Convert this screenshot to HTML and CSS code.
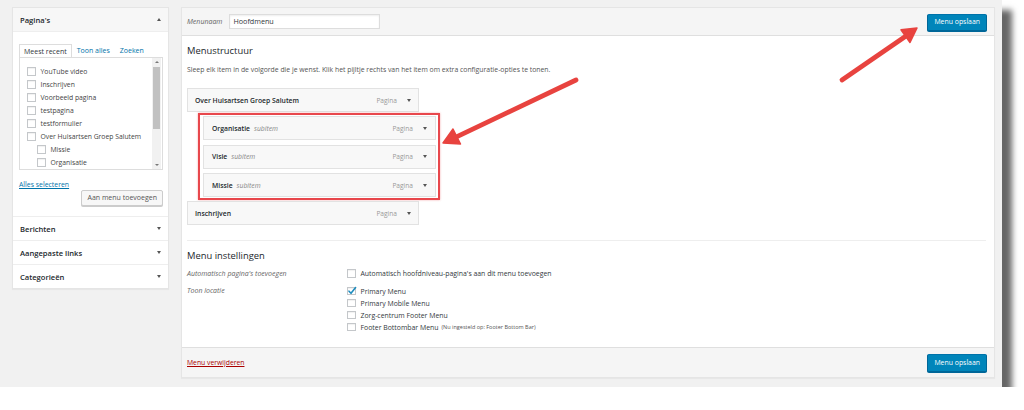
FILE: index.html
```html
<!DOCTYPE html>
<html lang="nl">
<head>
<meta charset="utf-8">
<title>Menu's</title>
<link rel="stylesheet" href="styles.css">
</head>
<body>
<div class="frame">
  <aside class="sidebar">
    <section class="acc">
      <header class="acc-head"><h3>Pagina's</h3><span class="caret up"></span></header>
      <div class="acc-body">
        <ul class="tabs">
          <li class="tab active">Meest recent</li>
          <li class="tab"><a href="#">Toon alles</a></li>
          <li class="tab"><a href="#">Zoeken</a></li>
        </ul>
        <div class="tab-panel">
          <ul class="checklist">
            <li><span class="cb"></span>YouTube video</li>
            <li><span class="cb"></span>Inschrijven</li>
            <li><span class="cb"></span>Voorbeeld pagina</li>
            <li><span class="cb"></span>testpagina</li>
            <li><span class="cb"></span>testformulier</li>
            <li><span class="cb"></span>Over Huisartsen Groep Salutem</li>
            <li class="child"><span class="cb"></span>Missie</li>
            <li class="child"><span class="cb"></span>Organisatie</li>
          </ul>
          <div class="scrollbar">
            <span class="sb-btn"><span class="caret tiny up"></span></span>
            <span class="sb-track"><span class="sb-thumb"></span></span>
            <span class="sb-btn"><span class="caret tiny"></span></span>
          </div>
        </div>
        <a class="select-all" href="#">Alles selecteren</a>
        <div class="add-row"><button class="btn">Aan menu toevoegen</button></div>
      </div>
    </section>
    <section class="acc closed"><header class="acc-head"><h3>Berichten</h3><span class="caret"></span></header></section>
    <section class="acc closed"><header class="acc-head"><h3>Aangepaste links</h3><span class="caret"></span></header></section>
    <section class="acc closed"><header class="acc-head"><h3>Categorieën</h3><span class="caret"></span></header></section>
  </aside>

  <main class="editor">
    <div class="ed-head">
      <label class="menu-name-label">Menunaam</label>
      <div class="name-input">Hoofdmenu</div>
      <button class="btn primary">Menu opslaan</button>
    </div>
    <div class="ed-body">
      <h3 class="ed-title">Menustructuur</h3>
      <p class="ed-desc">Sleep elk item in de volgorde die je wenst. Klik het pijltje rechts van het item om extra configuratie-opties te tonen.</p>
      <div class="menu-list">
        <div class="mi"><span class="mi-title">Over Huisartsen Groep Salutem</span><span class="mi-type">Pagina</span><span class="caret"></span></div>
        <div class="sub-group">
          <div class="mi"><span class="mi-title">Organisatie</span><em class="mi-sub">subitem</em><span class="mi-type">Pagina</span><span class="caret"></span></div>
          <div class="mi"><span class="mi-title">Visie</span><em class="mi-sub">subitem</em><span class="mi-type">Pagina</span><span class="caret"></span></div>
          <div class="mi"><span class="mi-title">Missie</span><em class="mi-sub">subitem</em><span class="mi-type">Pagina</span><span class="caret"></span></div>
        </div>
        <div class="mi"><span class="mi-title">Inschrijven</span><span class="mi-type">Pagina</span><span class="caret"></span></div>
      </div>
      <hr class="sep">
      <h3 class="ed-title settings-title">Menu instellingen</h3>
      <div class="setting auto">
        <div class="set-label">Automatisch pagina's toevoegen</div>
        <div class="set-fields">
          <div class="field"><span class="cb"></span>Automatisch hoofdniveau-pagina's aan dit menu toevoegen</div>
        </div>
      </div>
      <div class="setting locations">
        <div class="set-label">Toon locatie</div>
        <div class="set-fields">
          <div class="field"><span class="cb checked"><svg viewBox="0 0 10 10" width="10" height="10"><path d="M2 5.2 L4 7.3 L8.6 1.6" fill="none" stroke="#1e8cbe" stroke-width="1.6" stroke-linecap="round" stroke-linejoin="round"/></svg></span>Primary Menu</div>
          <div class="field"><span class="cb"></span>Primary Mobile Menu</div>
          <div class="field"><span class="cb"></span>Zorg-centrum Footer Menu</div>
          <div class="field"><span class="cb"></span>Footer Bottombar Menu <small class="note">(Nu ingesteld op: Footer Bottom Bar)</small></div>
        </div>
      </div>
    </div>
    <div class="ed-foot">
      <a class="delete" href="#">Menu verwijderen</a>
      <button class="btn primary">Menu opslaan</button>
    </div>
  </main>

  <svg class="arrows" width="1002" height="387" viewBox="0 0 1002 387">
    <g fill="#e8433f" stroke="#e8433f" stroke-linecap="round" stroke-linejoin="round">
      <line x1="842" y1="80" x2="906" y2="36" stroke-width="4.8"/>
      <polygon points="917,28 910,42.5 901,29.8" stroke-width="1.5"/>
      <line x1="576" y1="80" x2="457" y2="136.6" stroke-width="4.8"/>
      <polygon points="443,143 460.5,144 453,129" stroke-width="1.5"/>
    </g>
  </svg>
</div>
</body>
</html>
```

FILE: styles.css
```css
* { box-sizing: border-box; }
html, body { margin: 0; padding: 0; background: #fff; }
body { font-family: "Open Sans", "Liberation Sans", sans-serif; color: #32373c; }

.frame {
  position: relative;
  width: 1002px;
  height: 387px;
  background: #f1f1f1;
  box-shadow: 10px 10px 6px rgba(0,0,0,0.6);
  display: flex;
  align-items: flex-start;
  gap: 12px;
  padding: 7px 8px 9px 12px;
}

/* ---------- sidebar ---------- */
.sidebar {
  width: 157px;
  flex: none;
  background: #fff;
  border: 1px solid #e5e5e5;
  box-shadow: 0 1px 1px rgba(0,0,0,0.04);
}
.acc + .acc { border-top: 1px solid #eee; }
.acc-head {
  height: 24px;
  display: flex;
  align-items: center;
  justify-content: space-between;
  padding: 0 7px;
}
.acc:first-child .acc-head { background: #f7f7f7; border-bottom: 1px solid #eee; }
.acc-head h3 {
  margin: 0;
  font-size: 7.6px;
  font-weight: 600;
  color: #23282d;
}
.closed .acc-head { height: 23px; }

.caret {
  width: 0; height: 0;
  border-left: 2.5px solid transparent;
  border-right: 2.5px solid transparent;
  border-top: 3px solid #555;
}
.caret.up { border-top: 0; border-bottom: 3px solid #555; }
.caret.tiny { border-left-width: 2px; border-right-width: 2px; border-top-width: 2px; border-top-color: #777; }
.caret.tiny.up { border-top: 0; border-bottom: 2px solid #777; }

.acc-body { padding: 12px 5px 10px 6px; }
.tabs {
  list-style: none;
  margin: 0;
  padding: 0;
  display: flex;
  font-size: 7px;
  line-height: 13px;
}
.tab { padding: 0 5px; height: 13px; }
.tab a { color: #0073aa; text-decoration: none; }
.tab.active {
  border: 1px solid #ddd;
  border-bottom: 0;
  background: #fff;
  padding: 0 4px;
  color: #32373c;
}

.tab-panel {
  height: 113px;
  border: 1px solid #ddd;
  display: flex;
  overflow: hidden;
}
.checklist {
  list-style: none;
  margin: 0;
  padding: 7px 0 0 7px;
  flex: 1;
  font-size: 6.8px;
  line-height: 13px;
  color: #444;
}
.checklist li { display: flex; align-items: center; height: 13px; white-space: nowrap; }
.checklist li.child { padding-left: 10px; }
.cb {
  flex: none;
  width: 8.5px;
  height: 8.5px;
  border: 1px solid #c4c7ca;
  background: #fff;
  box-shadow: inset 0 1px 1px rgba(0,0,0,0.06);
  margin-right: 5px;
  position: relative;
}
.cb.checked svg { position: absolute; left: -1px; top: -2px; }

.scrollbar {
  width: 9px;
  margin-right: 1px;
  display: flex;
  flex-direction: column;
  background: #f1f1f1;
}
.sb-btn { height: 8px; display: flex; align-items: center; justify-content: center; }
.sb-track { flex: 1; padding: 1px; }
.sb-thumb { display: block; height: 62px; background: #c1c1c1; }

.select-all {
  display: block;
  margin-top: 10px;
  font-size: 6.9px;
  line-height: 10px;
  color: #0073aa;
  text-decoration: underline;
  width: max-content;
}
.add-row { display: flex; justify-content: flex-end; }

.btn {
  font-family: inherit;
  font-size: 7px;
  height: 16px;
  line-height: 14px;
  padding: 0 5px;
  border: 1px solid #ccc;
  border-radius: 2px;
  background: #f7f7f7;
  color: #555;
  box-shadow: 0 1px 0 #ccc;
  cursor: pointer;
}
.btn.primary {
  background: #0085ba;
  border-color: #0073aa #006799 #006799;
  color: #fff;
  box-shadow: 0 1px 0 #006799;
  height: 17px;
  padding: 0 6px;
  font-size: 6.9px;
}

/* ---------- editor ---------- */
.editor {
  flex: 1;
  height: 371px;
  background: #fff;
  border: 1px solid #e5e5e5;
  box-shadow: 0 1px 1px rgba(0,0,0,0.04);
  display: flex;
  flex-direction: column;
}
.ed-head {
  height: 28px;
  flex: none;
  background: #f5f5f5;
  border-bottom: 1px solid #dfdfdf;
  display: flex;
  align-items: center;
  padding: 0 7px 0 5px;
}
.menu-name-label {
  font-size: 7px;
  font-style: italic;
  color: #666;
  margin-right: 7px;
}
.name-input {
  width: 151px;
  height: 15px;
  border: 1px solid #ddd;
  background: #fff;
  box-shadow: inset 0 1px 2px rgba(0,0,0,0.07);
  font-size: 7.2px;
  line-height: 13px;
  padding: 0 3px;
  color: #32373c;
}
.ed-head .btn { margin-left: auto; margin-top: 1px; }

.ed-body {
  flex: 1;
  padding: 0 8px 0 5px;
}
.ed-title {
  margin: 9px 0 0;
  font-size: 9.4px;
  line-height: 12px;
  font-weight: 400;
  color: #23282d;
}
.ed-desc {
  margin: 8px 0 0;
  font-size: 6.85px;
  line-height: 10px;
  color: #555;
}
.menu-list { margin-top: 13px; width: 253px; }
.mi {
  width: 232px;
  height: 24px;
  background: #f8f8f8;
  border: 1px solid #e2e2e2;
  display: flex;
  align-items: center;
  padding: 0 7px;
  font-size: 6.8px;
}
.mi-title { font-weight: 600; color: #23282d; }
.mi-sub { font-style: italic; color: #888; margin-left: 4px; }
.mi-type { margin-left: auto; color: #999; margin-right: 10px; font-size: 6.6px; }
.sub-group {
  margin: 1px 0 1px 11px;
  width: 242px;
  border: 2px solid #e8474c;
  box-shadow: 0 0 2px rgba(232,71,76,0.45);
  padding: 1px 2px 1px 3px;
  display: flex;
  flex-direction: column;
  gap: 4.5px;
}
.sub-group .mi { width: 233px; padding: 0 8px; }

.sep {
  margin: 14.5px 0 0 0;
  border: 0;
  border-top: 1px solid #eee;
  height: 0;
  width: 799px;
}
.settings-title { margin-top: 9px; }
.setting { display: flex; font-size: 6.9px; }
.set-label {
  width: 160px;
  flex: none;
  font-style: italic;
  color: #666;
  font-size: 7px;
}
.field { display: flex; align-items: center; height: 12px; color: #32373c; }
.auto { margin-top: 7px; line-height: 10px; }
.auto .field { height: 10px; }
.auto .set-label { line-height: 10px; }
.locations { margin-top: 6.7px; }
.locations .set-label { line-height: 12px; }
.note { font-size: 5.5px; margin-left: 3px; color: #555; }

.ed-foot {
  height: 30px;
  flex: none;
  background: #f5f5f5;
  border-top: 1px solid #dfdfdf;
  display: flex;
  align-items: center;
  padding: 0 7px 0 5px;
}
.delete { font-size: 6.8px; color: #a00; text-decoration: underline; }
.ed-foot .btn { margin-left: auto; height: 18px; margin-top: 1px; }

.arrows { position: absolute; left: 0; top: 0; pointer-events: none; }
```
